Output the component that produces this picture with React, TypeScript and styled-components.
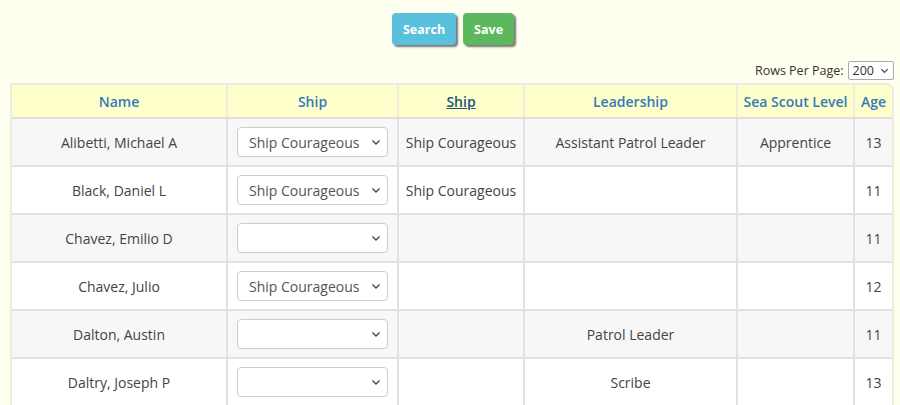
import React from 'react'
import styled, { createGlobalStyle } from 'styled-components'

const GlobalStyle = createGlobalStyle`
  body {
    margin: 0;
    background: #fffff0;
    font-family: 'Open Sans', 'Liberation Sans', sans-serif;
    color: #444;
  }
`

const Page = styled.div`
  padding: 13px 6px 0 10px;
  height: 405px;
  box-sizing: border-box;
  overflow: hidden;
`

const Toolbar = styled.div`
  display: flex;
  justify-content: center;
  gap: 7px;
  padding-left: 2px;
`

const ActionButton = styled.button<{ $color: string }>`
  height: 32px;
  padding: 0 11px;
  border: none;
  border-radius: 4px;
  background: ${(p) => p.$color};
  color: #fff;
  font-family: inherit;
  font-size: 12.5px;
  font-weight: 700;
  box-shadow: 2px 2px 2px #777;
`

const PagerRow = styled.div`
  display: flex;
  justify-content: flex-end;
  align-items: center;
  gap: 4px;
  margin-top: 15px;
  font-size: 12.5px;
  color: #333;
  height: 20px;
`

const PageSelect = styled.div`
  display: flex;
  align-items: center;
  gap: 5px;
  height: 17px;
  padding: 0 3px 0 4px;
  border: 1px solid #aaa;
  border-radius: 2px;
  background: #fff;
  font-size: 12.5px;
`

const TableWrap = styled.div`
  margin-top: 3px;
  border: 2px solid #ecece0;
  border-radius: 0 8px 0 0;
  overflow: hidden;
`

const Table = styled.table`
  width: 100%;
  border-collapse: collapse;
  table-layout: fixed;
  font-size: 14px;
`

const HeadCell = styled.th<{ $underline?: boolean }>`
  height: 32px;
  padding: 0;
  background: #ffffcc;
  font-weight: 600;
  font-size: 14px;
  border-left: 2px solid #ecece0;
  border-bottom: 2px solid #ddd;
  text-decoration: ${(p) => (p.$underline ? 'underline' : 'none')};
  color: ${(p) => (p.$underline ? '#23527c' : '#337ab7')};
  &:first-child {
    border-left: none;
  }
`

const Row = styled.tr<{ $odd: boolean }>`
  background: ${(p) => (p.$odd ? '#f7f7f7' : '#fff')};
`

const Cell = styled.td`
  height: 46px;
  padding: 0;
  text-align: center;
  border-left: 2px solid #e2e2e2;
  border-bottom: 2px solid #e2e2e2;
  &:first-child {
    border-left: none;
  }
`

const ShipSelect = styled.div`
  display: flex;
  align-items: center;
  justify-content: space-between;
  box-sizing: border-box;
  width: 151px;
  height: 30px;
  margin: 0 auto;
  padding: 0 5px 0 11px;
  background: #fff;
  border: 1px solid #ccc;
  border-radius: 4px;
  color: #555;
  font-size: 14px;
`

const Chevron = ({ size = 12 }: { size?: number }) => (
  <svg width={size} height={size} viewBox="0 0 12 12">
    <path d="M2.5 4.5 L6 8 L9.5 4.5" fill="none" stroke="#444" strokeWidth="1.3" />
  </svg>
)

type Scout = {
  name: string
  ship: string
  shipText: string
  leadership: string
  level: string
  age: number
}

const scouts: Scout[] = [
  { name: 'Alibetti, Michael A', ship: 'Ship Courageous', shipText: 'Ship Courageous', leadership: 'Assistant Patrol Leader', level: 'Apprentice', age: 13 },
  { name: 'Black, Daniel L', ship: 'Ship Courageous', shipText: 'Ship Courageous', leadership: '', level: '', age: 11 },
  { name: 'Chavez, Emilio D', ship: '', shipText: '', leadership: '', level: '', age: 11 },
  { name: 'Chavez, Julio', ship: 'Ship Courageous', shipText: '', leadership: '', level: '', age: 12 },
  { name: 'Dalton, Austin', ship: '', shipText: '', leadership: 'Patrol Leader', level: '', age: 11 },
  { name: 'Daltry, Joseph P', ship: '', shipText: '', leadership: 'Scribe', level: '', age: 13 },
]

const App = () => (
  <Page>
    <GlobalStyle />
    <Toolbar>
      <ActionButton $color="#5bc0de">Search</ActionButton>
      <ActionButton $color="#5cb85c">Save</ActionButton>
    </Toolbar>
    <PagerRow>
      Rows Per Page:
      <PageSelect>
        200 <Chevron size={11} />
      </PageSelect>
    </PagerRow>
    <TableWrap>
      <Table>
        <colgroup>
          <col style={{ width: 215 }} />
          <col style={{ width: 171 }} />
          <col style={{ width: 126 }} />
          <col style={{ width: 213 }} />
          <col style={{ width: 117 }} />
          <col />
        </colgroup>
        <thead>
          <tr>
            <HeadCell>Name</HeadCell>
            <HeadCell>Ship</HeadCell>
            <HeadCell $underline>Ship</HeadCell>
            <HeadCell>Leadership</HeadCell>
            <HeadCell>Sea Scout Level</HeadCell>
            <HeadCell>Age</HeadCell>
          </tr>
        </thead>
        <tbody>
          {scouts.map((s, i) => (
            <Row key={s.name} $odd={i % 2 === 0}>
              <Cell>{s.name}</Cell>
              <Cell>
                <ShipSelect>
                  <span>{s.ship}</span>
                  <Chevron />
                </ShipSelect>
              </Cell>
              <Cell>{s.shipText}</Cell>
              <Cell>{s.leadership}</Cell>
              <Cell>{s.level}</Cell>
              <Cell>{s.age}</Cell>
            </Row>
          ))}
        </tbody>
      </Table>
    </TableWrap>
  </Page>
)

export default App
